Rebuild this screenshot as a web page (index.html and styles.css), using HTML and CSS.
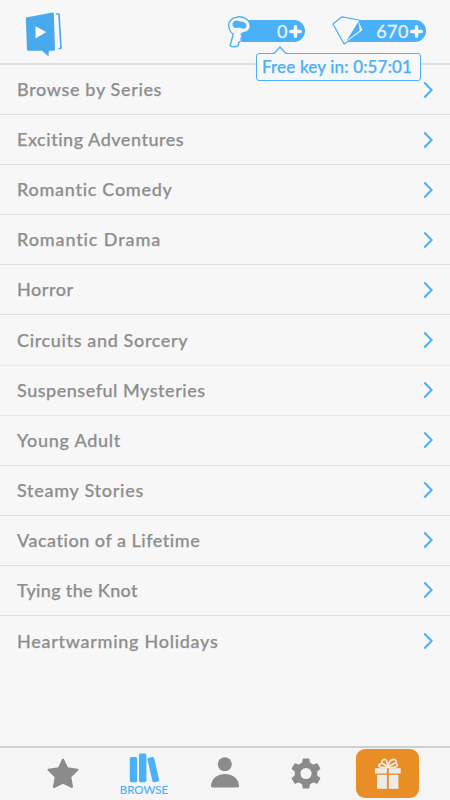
FILE: index.html
```html
<!DOCTYPE html>
<html lang="en">
<head>
<meta charset="utf-8">
<meta name="viewport" content="width=device-width, initial-scale=1">
<title>Browse</title>
<link rel="stylesheet" href="styles.css">
</head>
<body>
<svg class="sprite" aria-hidden="true">
  <symbol id="chevron" viewBox="0 0 10 18"><path d="M1.3 1.4 8.6 9 1.3 16.6" fill="none" stroke="#4ab0f8" stroke-width="2.1"/></symbol>
</svg>
<div class="app">
  <header class="header">
    <svg class="logo" viewBox="0 0 38 46">
      <path d="M1.2 5.6 27.6.6Q28.8.4 28.8 1.6L30 37.5Q30 38.8 28.8 38.8H23.8L23.6 44.6 17 38.8H3.2Q2 38.8 2 37.6L.8 6.8Q.8 5.8 1.2 5.6Z" fill="#48a9ee"/>
      <path d="M10.5 14.2 21.3 20 10.5 26.6Z" fill="#f7f7f7"/>
      <path d="M31.2 1.8 34 2.3 36 36.2 33.6 36.8" fill="none" stroke="#48a9ee" stroke-width="1.6"/>
    </svg>
    <div class="wallet">
      <div class="balance keys">
        <svg class="key" viewBox="0 0 24 32">
          <path d="M8.5 1.3C14.5-.6 21.5 3.6 22.3 9.3 22.8 13.4 19.7 16.5 15.2 16.8L13.1 18.6 14.6 20.5 12.8 22.5 13.8 24.5 10.7 26.3 10.2 29.6Q6 31.8 2.1 29.8L5.2 18.2C1.4 15.6-.2 10.5 1.3 6.3Q3.4 2.2 8.5 1.3Z" fill="#f7f7f7" stroke="#4ab0f8" stroke-width="1.4" stroke-linejoin="round"/>
          <path d="M5.2 6.1C7.3 3.9 10 4.1 11.8 5.5 15.4 5.4 18.4 7.1 18.6 9.8 18.5 12.7 14.7 13.7 11.8 11.6 8.2 12.6 5.6 11.9 4.6 9.5Q4.2 7.5 5.2 6.1Z" fill="#4ab0f8"/>
        </svg>
        <span>0</span>
        <svg class="plus" viewBox="0 0 12 12"><path d="M6 1.6V10.4M1.6 6H10.4" stroke="#f7f7f7" stroke-width="3.2" stroke-linecap="round"/></svg>
      </div>
      <div class="balance gems">
        <svg class="gem" viewBox="0 0 32 29">
          <path d="M.9 8 10 .8 26.8 4 31.1 14.6 12.2 28.1Z" fill="#f7f7f7" stroke="#4ab0f8" stroke-width="1.2" stroke-linejoin="round"/>
          <path d="M26.5 5.5 27.8 14.5 14.5 24.8Z" fill="#4ab0f8"/>
        </svg>
        <span>670</span>
        <svg class="plus" viewBox="0 0 12 12"><path d="M6 1.6V10.4M1.6 6H10.4" stroke="#f7f7f7" stroke-width="3.2" stroke-linecap="round"/></svg>
      </div>
    </div>
    <div class="timer"><svg class="pointer" viewBox="0 0 14 8"><path d="M.5 8 7 1 13.5 8" fill="#f7f7f7" stroke="#4ab0f8" stroke-width="1.3"/></svg><span>Free key in: 0:57:01</span></div>
  </header>
  <main class="list">
    <a class="row loose"><span>Browse by Series</span><svg class="chevron"><use href="#chevron"/></svg></a>
    <a class="row"><span>Exciting Adventures</span><svg class="chevron"><use href="#chevron"/></svg></a>
    <a class="row wide"><span>Romantic Comedy</span><svg class="chevron"><use href="#chevron"/></svg></a>
    <a class="row wider"><span>Romantic Drama</span><svg class="chevron"><use href="#chevron"/></svg></a>
    <a class="row"><span>Horror</span><svg class="chevron"><use href="#chevron"/></svg></a>
    <a class="row light loose"><span>Circuits and Sorcery</span><svg class="chevron"><use href="#chevron"/></svg></a>
    <a class="row light"><span>Suspenseful Mysteries</span><svg class="chevron"><use href="#chevron"/></svg></a>
    <a class="row wide"><span>Young Adult</span><svg class="chevron"><use href="#chevron"/></svg></a>
    <a class="row wide"><span>Steamy Stories</span><svg class="chevron"><use href="#chevron"/></svg></a>
    <a class="row"><span>Vacation of a Lifetime</span><svg class="chevron"><use href="#chevron"/></svg></a>
    <a class="row tight"><span>Tying the Knot</span><svg class="chevron"><use href="#chevron"/></svg></a>
    <a class="row wide"><span>Heartwarming Holidays</span><svg class="chevron"><use href="#chevron"/></svg></a>
  </main>
  <nav class="tabs">
    <a class="tab"><svg class="star" viewBox="0 0 32 31"><path d="M16 1.5 20.2 10.3 30.5 11.8 23.3 18.8 25 29 16 24.6 7 29 8.7 18.8 1.5 11.8 11.8 10.3Z" fill="#8b8b8b" stroke="#8b8b8b" stroke-width="2" stroke-linejoin="round"/></svg></a>
    <a class="tab active"><svg class="books" viewBox="0 0 31 30"><g fill="#4ab0f8"><rect x=".8" y="4" width="7.4" height="25.2" rx="1.6"/><rect x="10" y=".4" width="7.4" height="28.8" rx="1.6"/><rect x="20.9" y="4.2" width="6.8" height="25" rx="1.6" transform="rotate(-13 24 16.7)"/></g></svg><span>BROWSE</span></a>
    <a class="tab"><svg class="person" viewBox="0 0 28 31"><g fill="#8b8b8b"><circle cx="13.8" cy="7.2" r="7"/><path d="M1.4 30.5Q0 30.5 0 29.1C.3 12.8 27.7 12.8 28 29.1Q28 30.5 26.6 30.5Z"/></g></svg></a>
    <a class="tab"><svg class="gear" viewBox="0 0 30 31"><path d="M11.7 5.1 12.3 1.2H17.7L18.3 5.1 22.2 7.3 25.9 5.9 28.6 10.6 25.5 13.2V17.8L28.6 20.4 25.9 25.1 22.2 23.7 18.3 25.9 17.7 29.8H12.3L11.7 25.9 7.8 23.7 4.1 25.1 1.4 20.4 4.5 17.8V13.2L1.4 10.6 4.1 5.9 7.8 7.3Z" fill="#8b8b8b" stroke="#8b8b8b" stroke-width="1.4" stroke-linejoin="round"/><circle cx="15" cy="15.5" r="5.6" fill="#f5f5f5"/></svg></a>
    <a class="tab gift"><svg viewBox="0 0 26 31"><g fill="#ececec"><rect x="0" y="10.2" width="11.9" height="5.3"/><rect x="13.8" y="10.2" width="11.9" height="5.3"/><rect x="2" y="16.8" width="9.9" height="14"/><rect x="13.8" y="16.8" width="9.6" height="14"/></g><path d="M12.3 9.4C9 9.8 5 9.7 3.8 7.7 4.2 5.8 6 5.4 7.2 5.3 6.3 2.4 8.5.6 10.7 1.7 12.3 3 12.5 6.3 12.7 9 13.4 6 15.5 1.5 18.5 1.3 21.2 1.3 21.6 3.6 20.8 5 22.7 5.8 22.7 8.2 20.8 9.1 18 9.8 15 9.5 12.7 9.4L8 5.5M13 9 19.8 5" fill="none" stroke="#ececec" stroke-width="1.7" stroke-linejoin="round"/></svg></a>
  </nav>
</div>
</body>
</html>
```
FILE: styles.css
```css
* { box-sizing: border-box; }
body { margin: 0; background: #f7f7f7; color: #8e8e8e; font-family: Lato, sans-serif; }
svg { display: block; flex: none; }
.sprite { position: absolute; width: 0; height: 0; }
.app { height: 800px; display: flex; flex-direction: column; }
.header { position: relative; height: 65px; flex: none; border-bottom: 2px solid #dedede; display: flex; justify-content: space-between; padding: 12px 24px 0 25px; }
.logo { width: 38px; height: 46px; }
.wallet { display: flex; gap: 35px; padding-top: 8px; }
.balance { position: relative; height: 22px; border-radius: 0 11px 11px 0; background: #4ab0f8; display: flex; align-items: center; justify-content: flex-end; gap: 1px; padding-right: 3px; color: #e9f3fb; font-size: 18px; line-height: 22px; letter-spacing: .5px; -webkit-text-stroke: .3px currentColor; }
.keys { width: 63px; }
.gems { width: 86px; border-radius: 11px; }
.plus { width: 13px; height: 13px; }
.key { position: absolute; left: -14px; top: -4px; width: 24px; height: 32px; }
.gem { position: absolute; left: -8px; top: -4px; width: 32px; height: 29px; }
.timer { position: absolute; left: 256px; top: 53px; width: 165px; height: 28px; border: 1.5px solid #4ab0f8; border-radius: 3px; background: #f7f7f7; color: #4ab0f8; font-size: 17px; font-weight: 500; line-height: 25px; padding-left: 5px; letter-spacing: .16px; white-space: nowrap; -webkit-text-stroke: .25px currentColor; }
.pointer { position: absolute; left: 16px; top: -8px; width: 14px; height: 8px; }
.list { flex: 1; }
.row { height: 50.1px; display: flex; align-items: center; justify-content: space-between; padding: 0 17px 1px; border-bottom: 1px solid #e0e0e0; font-size: 18px; font-weight: 500; letter-spacing: .52px; -webkit-text-stroke: .25px currentColor; }
.row.light { border-color: #eaeaea; }
.row:last-child { border-bottom: 0; }
.loose { letter-spacing: .64px; }
.wide { letter-spacing: .72px; }
.wider { letter-spacing: .88px; }
.tight { letter-spacing: .33px; }
.chevron { width: 10px; height: 18px; margin-top: 1px; }
.tabs { height: 54px; flex: none; border-top: 2px solid #cfcfcf; background: #f5f5f5; display: grid; grid-template-columns: 104px 80px 81px 82px 81px; }
.tab { display: flex; flex-direction: column; align-items: center; padding-top: 9px; }
.tab:first-child { padding-left: 22px; }
.star { width: 32px; height: 31px; margin-top: 1px; }
.active { padding-top: 5px; color: #4ab0f8; font-size: 11.5px; line-height: 14px; -webkit-text-stroke: .15px currentColor; }
.books { width: 31px; height: 30px; }
.person { width: 28px; height: 31px; }
.gear { width: 30px; height: 31px; margin-top: 1px; }
.gift { width: 63px; height: 49px; margin: 1px 0 0 9px; border-radius: 9px; background: #e88e25; }
.gift svg { width: 26px; height: 31px; }
```
